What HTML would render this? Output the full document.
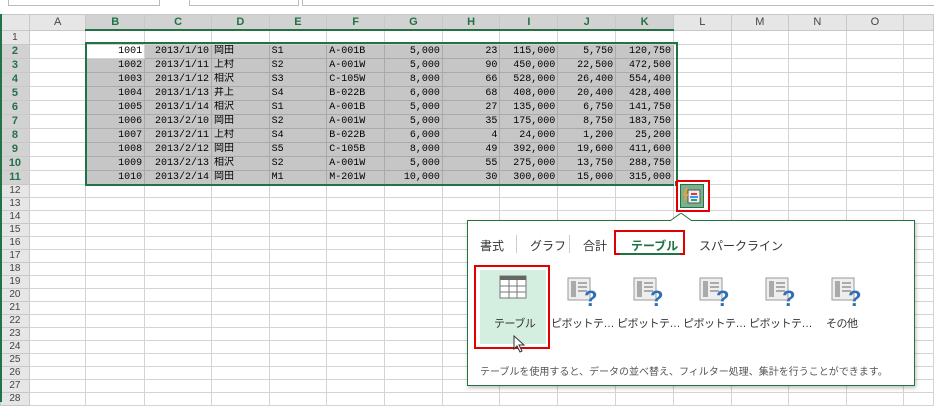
<!DOCTYPE html>
<html><head><meta charset="utf-8"><style>
body{margin:0;width:934px;height:402px;overflow:hidden;background:#fff;position:relative;font-family:"Liberation Sans","Noto Sans CJK JP",sans-serif;}
.a{position:absolute;}
table{position:absolute;left:0;top:14px;border-collapse:collapse;table-layout:fixed;font-size:10px;font-family:"Liberation Mono","Noto Sans CJK JP",monospace;}
td{height:13px;border:1px solid #d4d4d4;padding:0 2px;white-space:nowrap;overflow:hidden;line-height:13px;}
tr.t td{height:12px;line-height:12px;}
tr.h td{height:14px;background:#e6e6e6;color:#444;text-align:center;font-family:"Liberation Sans",sans-serif;font-size:11px;border-color:#c8c8c8;}
tr.h td.s{background:#d2d2d2;color:#217346;font-weight:bold;border-bottom:2px solid #217346;}
td.r{background:#e6e6e6;text-align:center;color:#444;font-family:"Liberation Sans",sans-serif;font-size:10px;border-color:#c8c8c8;}
td.rs{background:#d2d2d2;color:#217346;font-weight:bold;text-align:center;font-family:"Liberation Sans",sans-serif;font-size:11px;border-color:#c8c8c8;}
td.g{background:#c6c6c6;border-color:#aaa;}
td.n{text-align:right;}
.pop{left:467px;top:220px;width:446px;height:164px;border:1px solid #217346;background:#fff;box-shadow:1px 2px 4px rgba(0,0,0,.25);font-family:"Liberation Sans","Noto Sans CJK JP",sans-serif;}
.tab{position:absolute;top:16px;font-size:12px;color:#333;}
.sep{position:absolute;top:14px;width:1px;height:18px;background:#ccc;}
.lbl{position:absolute;top:94px;font-size:11px;color:#333;white-space:nowrap;letter-spacing:-0.5px;}
.ic{position:absolute;top:56px;}
</style></head><body>
<div class="a" style="left:8px;top:0;width:150px;height:5px;border:1px solid #bbb;border-top:none"></div>
<div class="a" style="left:189px;top:0;width:108px;height:5px;border:1px solid #bbb;border-top:none"></div>
<div class="a" style="left:302px;top:0;width:640px;height:5px;border:1px solid #bbb;border-top:none"></div>
<table>
<colgroup><col style="width:29px"><col style="width:57px"><col style="width:59px"><col style="width:67px"><col style="width:58px"><col style="width:58px"><col style="width:58px"><col style="width:58px"><col style="width:58px"><col style="width:58px"><col style="width:58px"><col style="width:58px"><col style="width:58px"><col style="width:58px"><col style="width:58px"><col style="width:58px"><col style="width:30px"></colgroup>
<tr class="h"><td></td><td>A</td><td class="s">B</td><td class="s">C</td><td class="s">D</td><td class="s">E</td><td class="s">F</td><td class="s">G</td><td class="s">H</td><td class="s">I</td><td class="s">J</td><td class="s">K</td><td>L</td><td>M</td><td>N</td><td>O</td><td></td></tr>
<tr><td class="r">1</td><td></td><td></td><td></td><td></td><td></td><td></td><td></td><td></td><td></td><td></td><td></td><td></td><td></td><td></td><td></td><td></td></tr>
<tr><td class="rs">2</td><td></td><td class="n" style="background:#fff">1001</td><td class="g n">2013/1/10</td><td class="g">岡田</td><td class="g">S1</td><td class="g">A-001B</td><td class="g n">5,000</td><td class="g n">23</td><td class="g n">115,000</td><td class="g n">5,750</td><td class="g n">120,750</td><td></td><td></td><td></td><td></td><td></td></tr>
<tr><td class="rs">3</td><td></td><td class="g n">1002</td><td class="g n">2013/1/11</td><td class="g">上村</td><td class="g">S2</td><td class="g">A-001W</td><td class="g n">5,000</td><td class="g n">90</td><td class="g n">450,000</td><td class="g n">22,500</td><td class="g n">472,500</td><td></td><td></td><td></td><td></td><td></td></tr>
<tr><td class="rs">4</td><td></td><td class="g n">1003</td><td class="g n">2013/1/12</td><td class="g">相沢</td><td class="g">S3</td><td class="g">C-105W</td><td class="g n">8,000</td><td class="g n">66</td><td class="g n">528,000</td><td class="g n">26,400</td><td class="g n">554,400</td><td></td><td></td><td></td><td></td><td></td></tr>
<tr><td class="rs">5</td><td></td><td class="g n">1004</td><td class="g n">2013/1/13</td><td class="g">井上</td><td class="g">S4</td><td class="g">B-022B</td><td class="g n">6,000</td><td class="g n">68</td><td class="g n">408,000</td><td class="g n">20,400</td><td class="g n">428,400</td><td></td><td></td><td></td><td></td><td></td></tr>
<tr><td class="rs">6</td><td></td><td class="g n">1005</td><td class="g n">2013/1/14</td><td class="g">相沢</td><td class="g">S1</td><td class="g">A-001B</td><td class="g n">5,000</td><td class="g n">27</td><td class="g n">135,000</td><td class="g n">6,750</td><td class="g n">141,750</td><td></td><td></td><td></td><td></td><td></td></tr>
<tr><td class="rs">7</td><td></td><td class="g n">1006</td><td class="g n">2013/2/10</td><td class="g">岡田</td><td class="g">S2</td><td class="g">A-001W</td><td class="g n">5,000</td><td class="g n">35</td><td class="g n">175,000</td><td class="g n">8,750</td><td class="g n">183,750</td><td></td><td></td><td></td><td></td><td></td></tr>
<tr><td class="rs">8</td><td></td><td class="g n">1007</td><td class="g n">2013/2/11</td><td class="g">上村</td><td class="g">S4</td><td class="g">B-022B</td><td class="g n">6,000</td><td class="g n">4</td><td class="g n">24,000</td><td class="g n">1,200</td><td class="g n">25,200</td><td></td><td></td><td></td><td></td><td></td></tr>
<tr><td class="rs">9</td><td></td><td class="g n">1008</td><td class="g n">2013/2/12</td><td class="g">岡田</td><td class="g">S5</td><td class="g">C-105B</td><td class="g n">8,000</td><td class="g n">49</td><td class="g n">392,000</td><td class="g n">19,600</td><td class="g n">411,600</td><td></td><td></td><td></td><td></td><td></td></tr>
<tr><td class="rs">10</td><td></td><td class="g n">1009</td><td class="g n">2013/2/13</td><td class="g">相沢</td><td class="g">S2</td><td class="g">A-001W</td><td class="g n">5,000</td><td class="g n">55</td><td class="g n">275,000</td><td class="g n">13,750</td><td class="g n">288,750</td><td></td><td></td><td></td><td></td><td></td></tr>
<tr><td class="rs">11</td><td></td><td class="g n">1010</td><td class="g n">2013/2/14</td><td class="g">岡田</td><td class="g">M1</td><td class="g">M-201W</td><td class="g n">10,000</td><td class="g n">30</td><td class="g n">300,000</td><td class="g n">15,000</td><td class="g n">315,000</td><td></td><td></td><td></td><td></td><td></td></tr>
<tr class="t"><td class="r">12</td><td></td><td></td><td></td><td></td><td></td><td></td><td></td><td></td><td></td><td></td><td></td><td></td><td></td><td></td><td></td><td></td></tr>
<tr class="t"><td class="r">13</td><td></td><td></td><td></td><td></td><td></td><td></td><td></td><td></td><td></td><td></td><td></td><td></td><td></td><td></td><td></td><td></td></tr>
<tr class="t"><td class="r">14</td><td></td><td></td><td></td><td></td><td></td><td></td><td></td><td></td><td></td><td></td><td></td><td></td><td></td><td></td><td></td><td></td></tr>
<tr class="t"><td class="r">15</td><td></td><td></td><td></td><td></td><td></td><td></td><td></td><td></td><td></td><td></td><td></td><td></td><td></td><td></td><td></td><td></td></tr>
<tr class="t"><td class="r">16</td><td></td><td></td><td></td><td></td><td></td><td></td><td></td><td></td><td></td><td></td><td></td><td></td><td></td><td></td><td></td><td></td></tr>
<tr class="t"><td class="r">17</td><td></td><td></td><td></td><td></td><td></td><td></td><td></td><td></td><td></td><td></td><td></td><td></td><td></td><td></td><td></td><td></td></tr>
<tr class="t"><td class="r">18</td><td></td><td></td><td></td><td></td><td></td><td></td><td></td><td></td><td></td><td></td><td></td><td></td><td></td><td></td><td></td><td></td></tr>
<tr class="t"><td class="r">19</td><td></td><td></td><td></td><td></td><td></td><td></td><td></td><td></td><td></td><td></td><td></td><td></td><td></td><td></td><td></td><td></td></tr>
<tr class="t"><td class="r">20</td><td></td><td></td><td></td><td></td><td></td><td></td><td></td><td></td><td></td><td></td><td></td><td></td><td></td><td></td><td></td><td></td></tr>
<tr class="t"><td class="r">21</td><td></td><td></td><td></td><td></td><td></td><td></td><td></td><td></td><td></td><td></td><td></td><td></td><td></td><td></td><td></td><td></td></tr>
<tr class="t"><td class="r">22</td><td></td><td></td><td></td><td></td><td></td><td></td><td></td><td></td><td></td><td></td><td></td><td></td><td></td><td></td><td></td><td></td></tr>
<tr class="t"><td class="r">23</td><td></td><td></td><td></td><td></td><td></td><td></td><td></td><td></td><td></td><td></td><td></td><td></td><td></td><td></td><td></td><td></td></tr>
<tr class="t"><td class="r">24</td><td></td><td></td><td></td><td></td><td></td><td></td><td></td><td></td><td></td><td></td><td></td><td></td><td></td><td></td><td></td><td></td></tr>
<tr class="t"><td class="r">25</td><td></td><td></td><td></td><td></td><td></td><td></td><td></td><td></td><td></td><td></td><td></td><td></td><td></td><td></td><td></td><td></td></tr>
<tr class="t"><td class="r">26</td><td></td><td></td><td></td><td></td><td></td><td></td><td></td><td></td><td></td><td></td><td></td><td></td><td></td><td></td><td></td><td></td></tr>
<tr class="t"><td class="r">27</td><td></td><td></td><td></td><td></td><td></td><td></td><td></td><td></td><td></td><td></td><td></td><td></td><td></td><td></td><td></td><td></td></tr>
<tr class="t"><td class="r">28</td><td></td><td></td><td></td><td></td><td></td><td></td><td></td><td></td><td></td><td></td><td></td><td></td><td></td><td></td><td></td><td></td></tr>
</table>
<div class="a" style="left:0;top:14px;width:2px;height:388px;background:#217346"></div>
<div class="a" style="left:85px;top:42px;width:589px;height:140px;border:2px solid #217346"></div>
<div class="a" style="left:674px;top:180px;width:5px;height:5px;background:#217346;border:1px solid #fff"></div>
<div class="a" style="left:676px;top:180px;width:34px;height:32px;border:2px solid #e00000;box-sizing:border-box;background:#fff"></div>
<div class="a" style="left:680px;top:184px;width:22px;height:22px;background:#7fb08c;border:1px solid #217346"></div>
<svg class="a" style="left:682px;top:186px" width="20" height="20"><rect x="6" y="4" width="12" height="13" fill="#eee" stroke="#555"/><path d="M5 2 L2 9 H5 L3 14" stroke="#e6a23c" stroke-width="2" fill="none"/><rect x="9" y="7" width="6" height="2" fill="#e33"/><rect x="8" y="10" width="8" height="2" fill="#39f"/><rect x="9" y="13" width="6" height="2" fill="#2a7"/></svg>
<div class="a pop">
 <svg class="a" style="left:202px;top:-8px" width="22" height="9"><path d="M0 8 L11 0 L22 8" fill="#fff" stroke="#217346"/></svg>
 <span class="tab" style="left:12px">書式</span><div class="sep" style="left:48px"></div>
 <span class="tab" style="left:62px">グラフ</span><div class="sep" style="left:101px"></div>
 <span class="tab" style="left:115px">合計</span>
 <div class="a" style="left:146px;top:9px;width:71px;height:25px;border:2px solid #e00000;box-sizing:border-box"></div>
 <span class="tab" style="left:163px;color:#217346;font-weight:bold">テーブル</span>
 <div class="a" style="left:152px;top:32px;width:60px;height:2px;background:#217346"></div>
 <span class="tab" style="left:231px">スパークライン</span>
 <div class="a" style="left:6px;top:44px;width:76px;height:84px;border:2px solid #e00000;box-sizing:border-box"></div>
 <div class="a" style="left:12px;top:49px;width:66px;height:74px;background:#d4efe0"></div>
 <svg class="ic" style="left:31px;top:53px" width="28" height="26"><rect x="1" y="2" width="26" height="22" fill="#fff" stroke="#777"/><rect x="1" y="2" width="26" height="4" fill="#666"/><path d="M10 6V24M18 6V24M1 12H27M1 18H27" stroke="#777"/></svg>
 <span class="lbl" style="left:26px">テーブル</span>
 <svg class="a" style="left:45px;top:114px" width="14" height="18"><path d="M1 1 L1 14 L4 11 L7 17 L9 16 L6 10 L11 10 Z" fill="#fff" stroke="#333"/></svg>
 <svg class="ic" style="left:99px" width="34" height="32"><rect x="1" y="1" width="22" height="22" fill="#eee" stroke="#999"/><rect x="4" y="4" width="5" height="16" fill="#aaa"/><path d="M11 6H20M11 10H20M11 14H20" stroke="#aaa" stroke-width="2"/><text x="17" y="29" font-size="22" font-weight="bold" fill="#2f6fb5" font-family="Liberation Sans">?</text></svg>
 <span class="lbl" style="left:83px">ピボットテ…</span>
 <svg class="ic" style="left:165px" width="34" height="32"><rect x="1" y="1" width="22" height="22" fill="#eee" stroke="#999"/><rect x="4" y="4" width="5" height="16" fill="#aaa"/><path d="M11 6H20M11 10H20M11 14H20" stroke="#aaa" stroke-width="2"/><text x="17" y="29" font-size="22" font-weight="bold" fill="#2f6fb5" font-family="Liberation Sans">?</text></svg>
 <span class="lbl" style="left:149px">ピボットテ…</span>
 <svg class="ic" style="left:231px" width="34" height="32"><rect x="1" y="1" width="22" height="22" fill="#eee" stroke="#999"/><rect x="4" y="4" width="5" height="16" fill="#aaa"/><path d="M11 6H20M11 10H20M11 14H20" stroke="#aaa" stroke-width="2"/><text x="17" y="29" font-size="22" font-weight="bold" fill="#2f6fb5" font-family="Liberation Sans">?</text></svg>
 <span class="lbl" style="left:215px">ピボットテ…</span>
 <svg class="ic" style="left:297px" width="34" height="32"><rect x="1" y="1" width="22" height="22" fill="#eee" stroke="#999"/><rect x="4" y="4" width="5" height="16" fill="#aaa"/><path d="M11 6H20M11 10H20M11 14H20" stroke="#aaa" stroke-width="2"/><text x="17" y="29" font-size="22" font-weight="bold" fill="#2f6fb5" font-family="Liberation Sans">?</text></svg>
 <span class="lbl" style="left:281px">ピボットテ…</span>
 <svg class="ic" style="left:363px" width="34" height="32"><rect x="1" y="1" width="22" height="22" fill="#eee" stroke="#999"/><rect x="4" y="4" width="5" height="16" fill="#aaa"/><path d="M11 6H20M11 10H20M11 14H20" stroke="#aaa" stroke-width="2"/><text x="17" y="29" font-size="22" font-weight="bold" fill="#2f6fb5" font-family="Liberation Sans">?</text></svg>
 <span class="lbl" style="left:358px">その他</span>
 <span class="a" style="left:12px;top:142px;font-size:10px;color:#555;white-space:nowrap">テーブルを使用すると、データの並べ替え、フィルター処理、集計を行うことができます。</span>
</div>
</body></html>
